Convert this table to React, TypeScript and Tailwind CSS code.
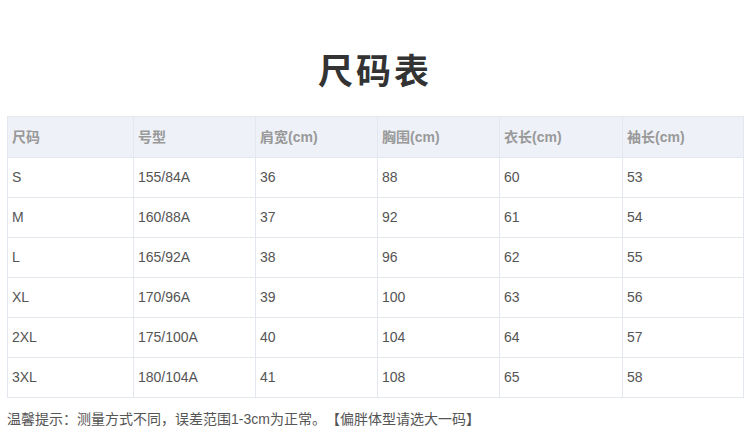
const headers = ["尺码", "号型", "肩宽(cm)", "胸围(cm)", "衣长(cm)", "袖长(cm)"]

const rows = [
  ["S", "155/84A", "36", "88", "60", "53"],
  ["M", "160/88A", "37", "92", "61", "54"],
  ["L", "165/92A", "38", "96", "62", "55"],
  ["XL", "170/96A", "39", "100", "63", "56"],
  ["2XL", "175/100A", "40", "104", "64", "57"],
  ["3XL", "180/104A", "41", "108", "65", "58"],
]

const font = { fontFamily: '"Liberation Sans", "Noto Sans CJK SC", sans-serif' }

export default function App() {
  return (
    <div className="w-[750px] h-[448px] bg-white overflow-hidden [text-spacing-trim:space-all]" style={font}>
      <div className="h-[116px] flex items-center justify-center pt-[27px]">
        <h1 className="text-[35px] font-bold text-[#333] tracking-[3px] leading-none">尺码表</h1>
      </div>
      <div className="mx-[7px] w-[737px] border border-[#e3e7ef]">
        <div className="grid grid-cols-[125px_122px_122px_122px_123px_1fr] h-[40px] bg-[#eef2f8]">
          {headers.map((h, i) => (
            <div
              key={h}
              className={`flex items-center pl-[4px] text-[14px] font-bold text-[#999] ${i > 0 ? "border-l border-[#e3e7ef]" : ""}`}
            >
              {h}
            </div>
          ))}
        </div>
        {rows.map((r) => (
          <div key={r[0]} className="grid grid-cols-[125px_122px_122px_122px_123px_1fr] h-[40px] border-t border-[#e3e7ef]">
            {r.map((c, i) => (
              <div
                key={i}
                className={`flex items-center pl-[4px] text-[14px] text-[#555] ${i > 0 ? "border-l border-[#e3e7ef]" : ""}`}
              >
                {c}
              </div>
            ))}
          </div>
        ))}
      </div>
      <p className="mt-[14px] ml-[7px] text-[14px] text-[#555] leading-none">
        温馨提示：测量方式不同，误差范围1-3cm为正常。【偏胖体型请选大一码】
      </p>
    </div>
  )
}
